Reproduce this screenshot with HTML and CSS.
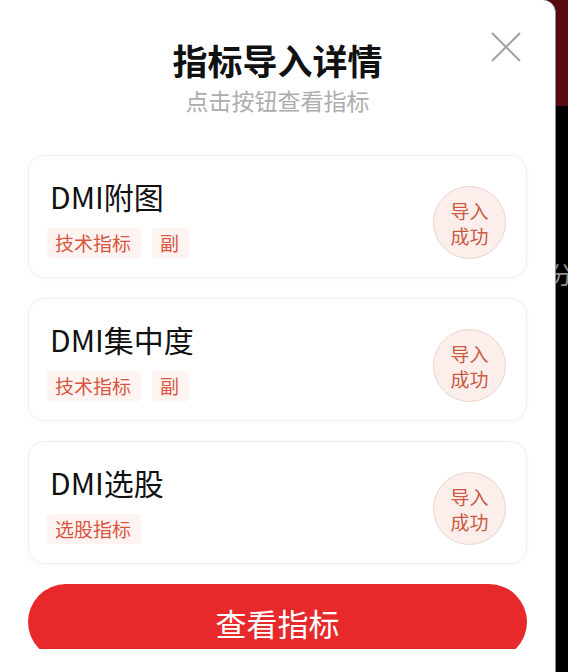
FILE: index.html
```html
<!DOCTYPE html>
<html>

<head>
    <meta charset="utf-8">
    <meta name="viewport" content="width=device-width, initial-scale=1.0">
    <title>指标导入详情</title>
    <link rel="stylesheet" href="styles.css">
</head>

<body>
    <!-- Texte de la page en dessous -->
    <span class="behind">分</span>

    <section class="sheet">
        <header class="sheet-head">
            <h1 class="sheet-title">指标导入详情</h1>
            <p class="sheet-sub">点击按钮查看指标</p>
            <button class="close" type="button" aria-label="关闭">
                <svg width="30" height="30" viewBox="0 0 30 30">
                    <path d="M1 1 L29 29 M29 1 L1 29" stroke="#a3a3a3" stroke-width="2" fill="none" />
                </svg>
            </button>
        </header>

        <ul class="list">
            <li class="item">
                <div class="item-info">
                    <div class="item-name">DMI附图</div>
                    <div class="tags">
                        <span class="tag">技术指标</span>
                        <span class="tag">副</span>
                    </div>
                </div>
                <div class="status">导入<br>成功</div>
            </li>
            <li class="item">
                <div class="item-info">
                    <div class="item-name">DMI集中度</div>
                    <div class="tags">
                        <span class="tag">技术指标</span>
                        <span class="tag">副</span>
                    </div>
                </div>
                <div class="status">导入<br>成功</div>
            </li>
            <li class="item">
                <div class="item-info">
                    <div class="item-name">DMI选股</div>
                    <div class="tags">
                        <span class="tag">选股指标</span>
                    </div>
                </div>
                <div class="status">导入<br>成功</div>
            </li>
        </ul>

        <div class="footer">
            <button class="view-btn" type="button">查看指标</button>
        </div>
        <div class="sheet-end"></div>
    </section>
</body>

</html>
```

FILE: styles.css
```css
/* Style général */
html {
    background: #fff;
}

body {
    margin: 0;
    padding: 0;
    width: 568px;
    height: 672px;
    background: linear-gradient(to bottom, #58090f 0, #58090f 106px, #000 106px);
    font-family: "Noto Sans CJK SC", "Noto Sans", sans-serif;
    position: relative;
}

.behind {
    position: absolute;
    left: 549px;
    top: 259px;
    width: 19px;
    overflow: hidden;
    font-size: 24px;
    line-height: 30px;
    color: #8f8f8f;
}

/* Feuille blanche */
.sheet {
    position: relative;
    width: 556px;
    height: 672px;
    background: #fff;
    border-top-right-radius: 13px;
    border-right: 1px solid #8c8c8c;
    box-sizing: border-box;
    padding: 0 28px;
    display: flex;
    flex-direction: column;
}

.sheet-head {
    text-align: center;
    padding-top: 36px;
    height: 155px;
    box-sizing: border-box;
    flex-shrink: 0;
}

.sheet-title {
    margin: 0;
    font-size: 35px;
    line-height: 48px;
    font-weight: 600;
    color: #111;
}

.sheet-sub {
    margin: 1px 0 0;
    font-size: 23px;
    line-height: 30px;
    color: #adadad;
}

.close {
    position: absolute;
    top: 32px;
    right: 34px;
    padding: 0;
    border: none;
    background: none;
    width: 30px;
    height: 30px;
}

/* Liste des indicateurs */
.list {
    list-style: none;
    margin: 0;
    padding: 0;
    display: flex;
    flex-direction: column;
    gap: 20px;
    flex-shrink: 0;
}

.item {
    height: 123px;
    box-sizing: border-box;
    border: 1px solid #f6eceb;
    border-radius: 16px;
    box-shadow: 0 1px 4px rgba(200, 150, 140, 0.07);
    display: flex;
    align-items: center;
    justify-content: space-between;
    padding: 0 20px 0 21px;
}

.item-name {
    font-size: 30px;
    line-height: 40px;
    color: #111;
}

.tags {
    display: flex;
    gap: 11px;
    margin-top: 12px;
    margin-left: -3px;
}

.tag {
    background: #fdf4f2;
    color: #d9553f;
    font-size: 19px;
    line-height: 30px;
    padding: 0 10px 0 8px;
    border-radius: 3px;
}

.status {
    width: 73px;
    height: 73px;
    box-sizing: border-box;
    border-radius: 50%;
    border: 1px solid #ead3cd;
    background: #fcefeb;
    color: #c95a44;
    font-size: 19px;
    line-height: 25px;
    display: flex;
    align-items: center;
    justify-content: center;
    text-align: center;
    margin-top: 12px;
}

/* Bouton du bas */
.footer {
    margin-top: 20px;
    height: 65px;
    overflow: hidden;
    flex-shrink: 0;
}

.view-btn {
    display: block;
    width: 100%;
    height: 76px;
    border: none;
    border-radius: 38px;
    background: #e8292b;
    color: #fff;
    font-family: inherit;
    font-size: 31px;
    padding: 0;
}

.sheet-end {
    flex: 1;
    background: #fff;
}
```
